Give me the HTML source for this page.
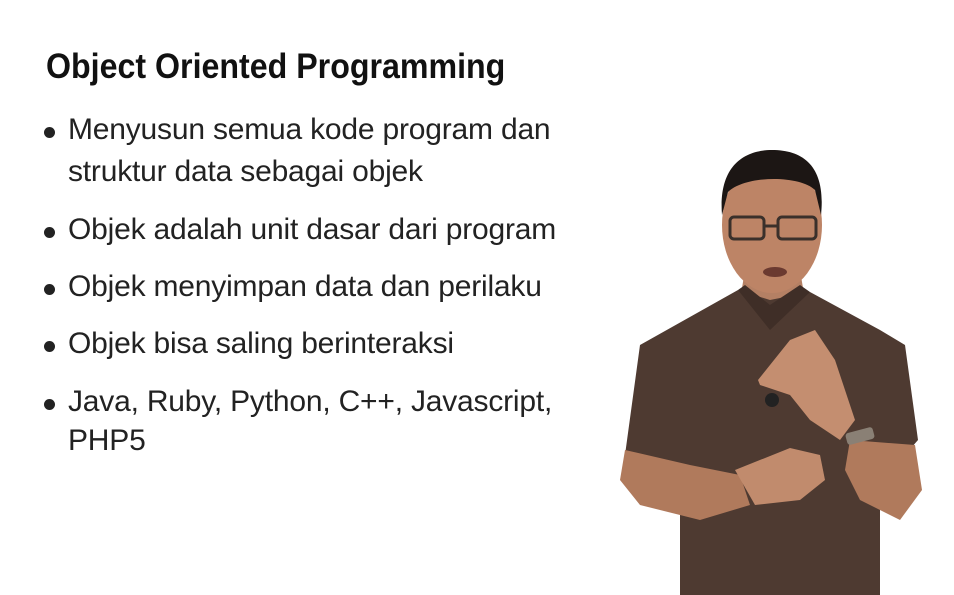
<!DOCTYPE html>
<html><head><style>
body{margin:0;width:954px;height:595px;background:#fff;position:relative;overflow:hidden;font-family:"Liberation Sans",sans-serif;color:#1e1e1e}
.t{position:absolute;left:46px;top:47px;font-size:35px;font-weight:bold;transform:scaleX(0.919);transform-origin:0 0;white-space:nowrap;color:#111}
.l{position:absolute;left:68px;font-size:30px;white-space:nowrap;letter-spacing:-0.2px;color:#222}
.b{position:absolute;left:44px;width:11px;height:11px;border-radius:50%;background:#222}
</style></head><body>
<div class="t">Object Oriented Programming</div>
<div class="b" style="top:127px"></div><div class="l" style="top:113px">Menyusun semua kode program dan</div>
<div class="l" style="top:155px">struktur data sebagai objek</div>
<div class="b" style="top:227px"></div><div class="l" style="top:213px">Objek adalah unit dasar dari program</div>
<div class="b" style="top:284px"></div><div class="l" style="top:270px">Objek menyimpan data dan perilaku</div>
<div class="b" style="top:341px"></div><div class="l" style="top:327px">Objek bisa saling berinteraksi</div>
<div class="b" style="top:399px"></div><div class="l" style="top:385px">Java, Ruby, Python, C++, Javascript,</div>
<div class="l" style="top:424px">PHP5</div>
<svg style="position:absolute;left:0;top:0" width="954" height="595">
<path d="M745 270 L800 270 L805 300 L740 300Z" fill="#b48064"/>
<path d="M738 290 L770 300 L810 292 L880 330 L905 345 L918 440 L905 455 L880 450 L880 595 L680 595 L680 470 L625 455 L640 345 Z" fill="#4e3a31"/>
<path d="M738 290 L770 330 L810 292 L800 285 L770 305 L745 285Z" fill="#3f2e27"/>
<path d="M625 450 L690 465 L740 475 L750 505 L700 520 L640 505 L620 480Z" fill="#b07a5c"/>
<path d="M850 440 L915 445 L922 490 L900 520 L860 500 L845 470Z" fill="#b07a5c"/>
<path d="M758 380 L790 340 L815 330 L835 360 L855 420 L840 440 L810 420 L790 395 L760 385Z" fill="#c48e70"/>
<path d="M735 470 L790 448 L820 455 L825 480 L800 500 L755 505Z" fill="#c18b6d"/>
<circle cx="772" cy="400" r="7" fill="#222"/>
<rect x="846" y="430" width="28" height="12" rx="3" fill="#8a8075" transform="rotate(-15 860 436)"/>
<ellipse cx="772" cy="225" rx="50" ry="68" fill="#bd8466"/>
<path d="M722 215 C718 165 745 150 772 150 C805 150 826 168 821 215 L815 190 C800 175 745 175 728 192Z" fill="#1c1614"/>
<rect x="730" y="217" width="34" height="22" rx="4" fill="none" stroke="#3a302b" stroke-width="3"/>
<rect x="778" y="217" width="38" height="22" rx="4" fill="none" stroke="#3a302b" stroke-width="3"/>
<path d="M764 226 L778 226" stroke="#3a302b" stroke-width="3"/>
<ellipse cx="775" cy="272" rx="12" ry="5" fill="#6b3a30"/>
</svg>
</body></html>
